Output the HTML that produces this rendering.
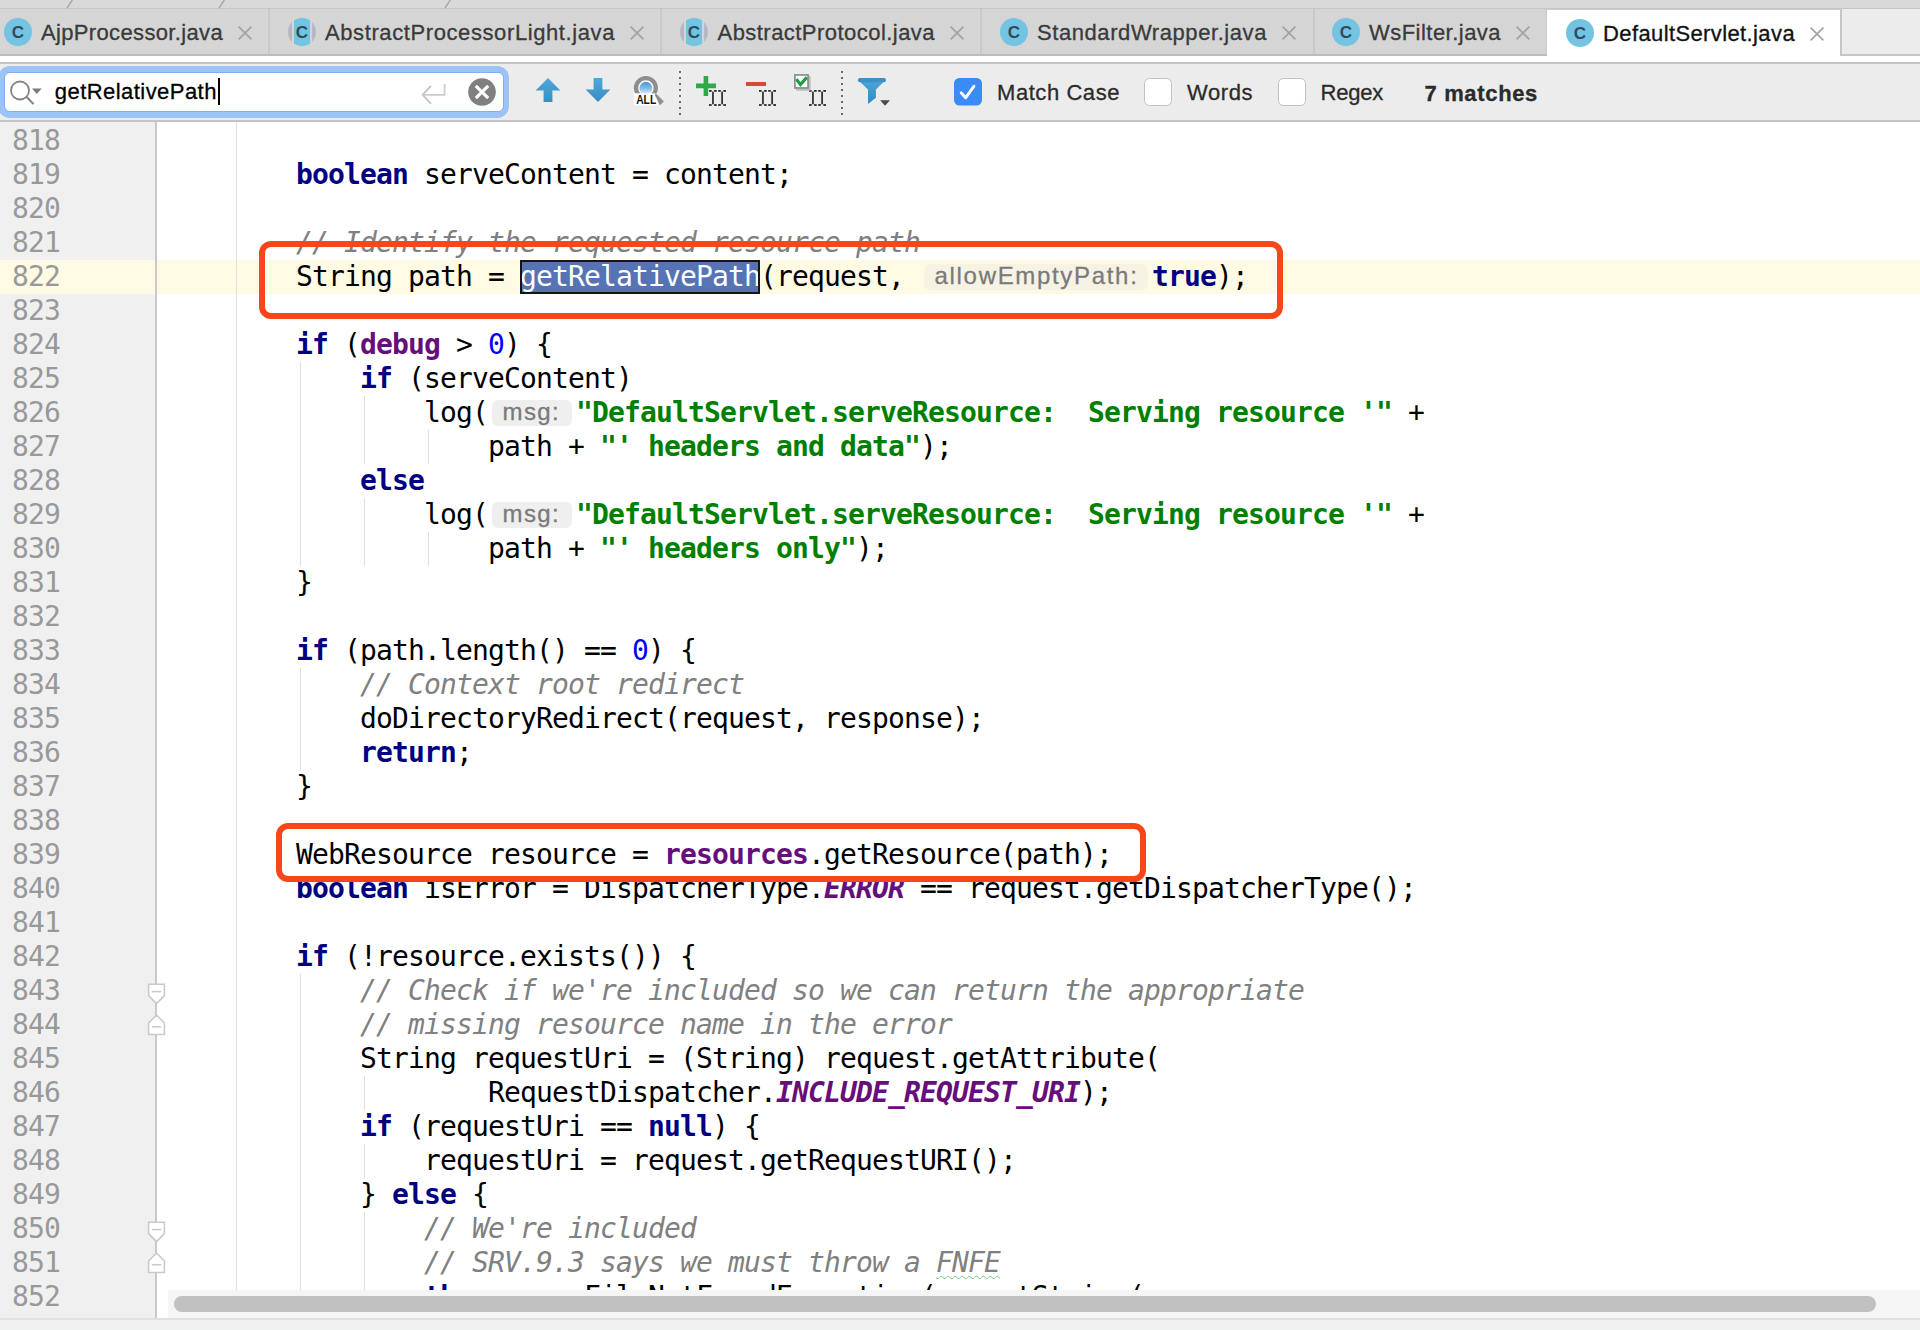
<!DOCTYPE html>
<html lang="en"><head><meta charset="utf-8"><title>DefaultServlet.java</title>
<style>
html,body{margin:0;padding:0}
body{width:1920px;height:1330px;position:relative;overflow:hidden;background:#fff;font-family:"Liberation Sans",sans-serif}
.abs,.abs *{box-sizing:border-box}
div,span,svg,i,b{position:absolute}
/* top */
#strip{left:0;top:0;width:1920px;height:9px;background:#d9d9d9;border-bottom:1px solid #c6c6c6;box-sizing:border-box}
#tabs{left:0;top:9px;width:1920px;height:47px;background:#d5d5d5;border-bottom:2px solid #bebebe;box-sizing:border-box}
.tab{top:0;height:45px}
.tab .sep{right:-1px;top:0;width:2px;height:45px;background:#c9c9c9}
.tab .lbl{top:1px;height:45px;line-height:45px;font-size:22px;color:#3a3a3a;white-space:nowrap;-webkit-text-stroke:0.3px #3a3a3a}
.tab.act{background:#fff;height:47px;border-top:1px solid #cfcfcf;box-sizing:border-box}
.tab.act .lbl{color:#111;-webkit-text-stroke:0.3px #111}
#rest{left:1840px;top:0;width:80px;height:47px;background:#ececec;border-left:2px solid #c6c6c6;border-bottom:2px solid #c6c6c6;box-sizing:border-box}
#wgap{left:0;top:56px;width:1920px;height:6px;background:#fff}
#search{left:0;top:62px;width:1920px;height:60px;background:#ececec;border-top:2px solid #c4c4c4;border-bottom:2px solid #c4c4c4;box-sizing:border-box}
.stext{font-size:22px;color:#2b2b2b;-webkit-text-stroke:0.3px;white-space:nowrap;line-height:28px;height:28px}
/* editor */
#gutter{left:0;top:122px;width:155px;height:1196px;background:#f0f0f0}
#gline{left:155px;top:122px;width:2px;height:1196px;background:#c9c9c9}
.ln,.cl{font-family:"DejaVu Sans Mono","Liberation Mono",monospace;font-size:28px;letter-spacing:-0.857px;line-height:34px;height:34px;white-space:pre}
.ln{left:12px;color:#999}
.cl{color:#000}
.cl b,.cl i,.cl span{position:static}
.k{color:#000080}.s{color:#008000}.n{color:#0000ff}.f{color:#660e7a}.sf{color:#660e7a;font-style:italic}
.c{color:#808080;font-weight:normal}
.typo{text-decoration:underline wavy #7fbf7f 1px;text-underline-offset:3px}
.cl .h{display:inline-block;position:relative;height:34px;vertical-align:top;margin:0 4px;letter-spacing:0}
.cl .h:before{content:"";position:absolute;left:0;right:0;top:4px;height:25.5px;border-radius:6px;background:#efefef}
.cl .h.hy:before{background:#f6f3e4}
.cl .h.hy span{letter-spacing:1.68px}
.cl .h span{position:absolute;left:10.5px;top:0;font-family:"Liberation Sans",sans-serif;font-size:24px;letter-spacing:1.4px;color:#7a7a7a;line-height:32px;-webkit-text-stroke:0.3px #7a7a7a}
.cl .sel{background:#5673b3;color:#fff;outline:2px solid #151515;outline-offset:-2px;display:inline-block;height:34px}
.g{width:1.4px;background:#e0e0e0}
.rbox{border:6px solid #f8461b;border-radius:12px;box-sizing:border-box}
</style></head><body>

<div id="strip"></div>
<svg style="left:0;top:0" width="960" height="9" viewBox="0 0 960 9">
<line x1="73" y1="-1" x2="67" y2="8" stroke="#a8a8a8" stroke-width="1.4"/>
<line x1="225" y1="-1" x2="219" y2="8" stroke="#a8a8a8" stroke-width="1.4"/>
<line x1="451" y1="-1" x2="445" y2="8" stroke="#a8a8a8" stroke-width="1.4"/>
</svg>
<div id="tabs">
<div class="tab" style="left:-15px;width:284px">
<svg style="left:19px;top:8.8px" width="28" height="28" viewBox="0 0 28 28"><circle cx="14" cy="14" r="14" fill="#73c3e3"/><text x="14" y="20.3" text-anchor="middle" font-family="Liberation Sans, sans-serif" font-weight="bold" font-size="17" fill="#2f4b5c">C</text></svg>
<span class="lbl" style="left:56px;letter-spacing:0.348px">AjpProcessor.java</span>
<svg style="left:253px;top:17px" width="14" height="14" viewBox="0 0 14 14"><path d="M0.6 0.6L13.4 13.4M13.4 0.6L0.6 13.4" stroke="#a3a3a3" stroke-width="1.7" fill="none"/></svg>
<div class="sep"></div>
</div>
<div class="tab" style="left:269px;width:392px">
<svg style="left:19px;top:8.8px" width="28" height="28" viewBox="0 0 28 28"><defs><clipPath id="cp33"><circle cx="14" cy="14" r="14"/></clipPath></defs><g clip-path="url(#cp33)"><rect x="0" y="0" width="4" height="28" fill="#b3bac6"/><rect x="24" y="0" width="4" height="28" fill="#b3bac6"/><rect x="6" y="0" width="16" height="28" fill="#73c3e3"/></g><text x="14" y="20.3" text-anchor="middle" font-family="Liberation Sans, sans-serif" font-weight="bold" font-size="17" fill="#2f4b5c">C</text></svg>
<span class="lbl" style="left:56px;letter-spacing:0.597px">AbstractProcessorLight.java</span>
<svg style="left:361px;top:17px" width="14" height="14" viewBox="0 0 14 14"><path d="M0.6 0.6L13.4 13.4M13.4 0.6L0.6 13.4" stroke="#a3a3a3" stroke-width="1.7" fill="none"/></svg>
<div class="sep"></div>
</div>
<div class="tab" style="left:661px;width:320px">
<svg style="left:19px;top:8.8px" width="28" height="28" viewBox="0 0 28 28"><defs><clipPath id="cp33"><circle cx="14" cy="14" r="14"/></clipPath></defs><g clip-path="url(#cp33)"><rect x="0" y="0" width="4" height="28" fill="#b3bac6"/><rect x="24" y="0" width="4" height="28" fill="#b3bac6"/><rect x="6" y="0" width="16" height="28" fill="#73c3e3"/></g><text x="14" y="20.3" text-anchor="middle" font-family="Liberation Sans, sans-serif" font-weight="bold" font-size="17" fill="#2f4b5c">C</text></svg>
<span class="lbl" style="left:56.5px;letter-spacing:0.459px">AbstractProtocol.java</span>
<svg style="left:289px;top:17px" width="14" height="14" viewBox="0 0 14 14"><path d="M0.6 0.6L13.4 13.4M13.4 0.6L0.6 13.4" stroke="#a3a3a3" stroke-width="1.7" fill="none"/></svg>
<div class="sep"></div>
</div>
<div class="tab" style="left:981px;width:332.5px">
<svg style="left:19px;top:8.8px" width="28" height="28" viewBox="0 0 28 28"><circle cx="14" cy="14" r="14" fill="#73c3e3"/><text x="14" y="20.3" text-anchor="middle" font-family="Liberation Sans, sans-serif" font-weight="bold" font-size="17" fill="#2f4b5c">C</text></svg>
<span class="lbl" style="left:56px;letter-spacing:0.575px">StandardWrapper.java</span>
<svg style="left:301px;top:17px" width="14" height="14" viewBox="0 0 14 14"><path d="M0.6 0.6L13.4 13.4M13.4 0.6L0.6 13.4" stroke="#a3a3a3" stroke-width="1.7" fill="none"/></svg>
<div class="sep"></div>
</div>
<div class="tab" style="left:1313.5px;width:233.5px">
<svg style="left:18px;top:8.8px" width="28" height="28" viewBox="0 0 28 28"><circle cx="14" cy="14" r="14" fill="#73c3e3"/><text x="14" y="20.3" text-anchor="middle" font-family="Liberation Sans, sans-serif" font-weight="bold" font-size="17" fill="#2f4b5c">C</text></svg>
<span class="lbl" style="left:55.5px;letter-spacing:0.469px">WsFilter.java</span>
<svg style="left:202px;top:17px" width="14" height="14" viewBox="0 0 14 14"><path d="M0.6 0.6L13.4 13.4M13.4 0.6L0.6 13.4" stroke="#a3a3a3" stroke-width="1.7" fill="none"/></svg>
<div class="sep"></div>
</div>
<div class="tab act" style="left:1547px;width:293px">
<svg style="left:19px;top:8.8px" width="28" height="28" viewBox="0 0 28 28"><circle cx="14" cy="14" r="14" fill="#73c3e3"/><text x="14" y="20.3" text-anchor="middle" font-family="Liberation Sans, sans-serif" font-weight="bold" font-size="17" fill="#2f4b5c">C</text></svg>
<span class="lbl" style="left:56px;letter-spacing:0.387px">DefaultServlet.java</span>
<svg style="left:263px;top:17px" width="14" height="14" viewBox="0 0 14 14"><path d="M0.6 0.6L13.4 13.4M13.4 0.6L0.6 13.4" stroke="#a3a3a3" stroke-width="1.7" fill="none"/></svg>
</div>
<div id="rest"></div>
</div>
<div id="wgap"></div>
<div id="search">
<div style="left:-2px;top:2.3px;width:511px;height:51.5px;border-radius:12px;background:#9bc3f5"></div>
<div style="left:4px;top:8.3px;width:499.5px;height:39.8px;border-radius:6px;background:#fff;border:1px solid #80afe9;box-sizing:border-box"></div>
<svg style="left:6px;top:14.5px" width="40" height="30" viewBox="0 0 40 30"><circle cx="14" cy="11.5" r="9" fill="none" stroke="#858585" stroke-width="1.8"/><path d="M20.6 18.1L27 24.5" stroke="#858585" stroke-width="2.1" stroke-linecap="round"/><path d="M26 9.5h9.7l-4.85 5.6z" fill="#7d7d7d"/></svg>
<span class="stext" style="left:54.8px;top:14px;color:#000;letter-spacing:0.446px">getRelativePath</span>
<div style="left:218px;top:14.3px;width:2px;height:27px;background:#000"></div>
<svg style="left:420px;top:18px" width="28" height="24" viewBox="0 0 28 24"><path d="M24.6 2v10.8H4" fill="none" stroke="#cdcdcd" stroke-width="1.8"/><path d="M11 3.8L2.6 12.8L11 21.8" fill="none" stroke="#c4c4c4" stroke-width="1.8"/></svg>
<svg style="left:468px;top:14px" width="28" height="28" viewBox="0 0 28 28"><circle cx="14" cy="14" r="13.8" fill="#808080"/><path d="M7.8 7.8L20.2 20.2M20.2 7.8L7.8 20.2" stroke="#fff" stroke-width="3.1"/></svg>
<svg style="left:534px;top:13px" width="80" height="28" viewBox="0 0 80 28"><defs><linearGradient id="ga" x1="0" y1="0" x2="0" y2="1"><stop offset="0" stop-color="#4ea8dc"/><stop offset="1" stop-color="#3a8cc2"/></linearGradient></defs><path d="M14 1L26.4 13.4H18.4V25H9.6V13.4H1.6z" fill="url(#ga)"/><path d="M64 25L76.4 12.6H68.4V1H59.6V12.6H51.6z" fill="url(#ga)"/></svg>
<svg style="left:630px;top:8px" width="40" height="36" viewBox="0 0 40 36"><defs><linearGradient id="gb" x1="0" y1="0" x2="0" y2="1"><stop offset="0" stop-color="#3f96d6"/><stop offset="0.55" stop-color="#8dbfe3"/><stop offset="1" stop-color="#e9f1f8"/></linearGradient></defs><circle cx="15.9" cy="16" r="9.9" fill="#fff" stroke="#8e8e8e" stroke-width="4.3"/><circle cx="15.9" cy="16.2" r="6.4" fill="url(#gb)"/><rect x="3.8" y="21.3" width="23.9" height="12.1" fill="#fff"/><path d="M25.4 20.8L33.9 29.6L29.8 33.3L26.6 26.6L25 23.4z" fill="#8e8e8e"/><text x="6.2" y="31.7" font-family="Liberation Sans, sans-serif" font-weight="bold" font-size="12" fill="#151515" textLength="20" lengthAdjust="spacingAndGlyphs">ALL</text></svg>
<div style="left:679px;top:7px;width:2px;height:44px;background:repeating-linear-gradient(to bottom,#6a6a6a 0,#6a6a6a 2px,transparent 2px,transparent 6px)"></div>
<div style="left:841px;top:7px;width:2px;height:44px;background:repeating-linear-gradient(to bottom,#6a6a6a 0,#6a6a6a 2px,transparent 2px,transparent 6px)"></div>
<svg style="left:709px;top:26px" width="18" height="17" viewBox="0 0 18 17"><g fill="#2b2b2b"><rect x="0" y="0" width="2.7" height="1.8"/><rect x="0" y="14.1" width="2.7" height="1.8"/><rect x="5.1" y="0" width="2.6" height="1.8"/><rect x="5.1" y="14.1" width="2.6" height="1.8"/><rect x="9.2" y="0" width="2.6" height="1.8"/><rect x="9.2" y="14.1" width="2.6" height="1.8"/><rect x="14.3" y="0" width="2.7" height="1.8"/><rect x="14.3" y="14.1" width="2.7" height="1.8"/><rect x="3.1" y="1.6" width="1.7" height="12.7"/><rect x="12.25" y="1.6" width="1.7" height="12.7"/></g></svg>
<svg style="left:759px;top:26px" width="18" height="17" viewBox="0 0 18 17"><g fill="#2b2b2b"><rect x="0" y="0" width="2.7" height="1.8"/><rect x="0" y="14.1" width="2.7" height="1.8"/><rect x="5.1" y="0" width="2.6" height="1.8"/><rect x="5.1" y="14.1" width="2.6" height="1.8"/><rect x="9.2" y="0" width="2.6" height="1.8"/><rect x="9.2" y="14.1" width="2.6" height="1.8"/><rect x="14.3" y="0" width="2.7" height="1.8"/><rect x="14.3" y="14.1" width="2.7" height="1.8"/><rect x="3.1" y="1.6" width="1.7" height="12.7"/><rect x="12.25" y="1.6" width="1.7" height="12.7"/></g></svg>
<svg style="left:809px;top:26px" width="18" height="17" viewBox="0 0 18 17"><g fill="#2b2b2b"><rect x="0" y="0" width="2.7" height="1.8"/><rect x="0" y="14.1" width="2.7" height="1.8"/><rect x="5.1" y="0" width="2.6" height="1.8"/><rect x="5.1" y="14.1" width="2.6" height="1.8"/><rect x="9.2" y="0" width="2.6" height="1.8"/><rect x="9.2" y="14.1" width="2.6" height="1.8"/><rect x="14.3" y="0" width="2.7" height="1.8"/><rect x="14.3" y="14.1" width="2.7" height="1.8"/><rect x="3.1" y="1.6" width="1.7" height="12.7"/><rect x="12.25" y="1.6" width="1.7" height="12.7"/></g></svg>
<svg style="left:696px;top:12px" width="20" height="20" viewBox="0 0 20 20"><path d="M7.6 0h4.6v7.6H20v4.6h-7.8V20H7.6v-7.8H0V7.6h7.6z" fill="#2fa84a"/></svg>
<div style="left:746px;top:18px;width:20px;height:4.2px;background:#d8483a"></div>
<svg style="left:793px;top:9px" width="19" height="19" viewBox="0 0 19 19"><rect x="3" y="3" width="14.6" height="14.7" fill="#bcbcbc"/><rect x="1.85" y="1.95" width="13.2" height="13" fill="#fff" stroke="#8c8c8c" stroke-width="1.7"/><path d="M3.4 6.2L7.4 11.6L13.8 4.4" fill="none" stroke="#1f9b42" stroke-width="3.1"/></svg>
<svg style="left:856px;top:12px" width="38" height="32" viewBox="0 0 38 32"><defs><linearGradient id="gf" x1="0" y1="0" x2="0" y2="1"><stop offset="0" stop-color="#4aa3d8"/><stop offset="1" stop-color="#3889c2"/></linearGradient></defs><path d="M4.2 6.1H27.5L19.9 13.5V21.7L12 27.9V13.5z" fill="url(#gf)"/><rect x="1.9" y="1.9" width="28.1" height="4.4" rx="2.1" fill="#3c90c8"/><path d="M24.1 24.3h9.9l-4.95 5.5z" fill="#4a4a4a"/></svg>
<svg style="left:954px;top:14px" width="28" height="28" viewBox="0 0 28 28"><rect x="0" y="0" width="28" height="27.6" rx="5.5" fill="#3a8bf6"/><path d="M7.2 14.8L11.6 19.8L20 8.2" fill="none" stroke="#fff" stroke-width="2.9" stroke-linecap="round" stroke-linejoin="round"/></svg>
<div style="left:1144px;top:14px;width:28px;height:27.6px;border-radius:5.5px;background:#fff;border:1px solid #c2c2c2;box-sizing:border-box"></div>
<div style="left:1278px;top:14px;width:28px;height:27.6px;border-radius:5.5px;background:#fff;border:1px solid #c2c2c2;box-sizing:border-box"></div>
<span class="stext" style="left:997px;top:14.5px;letter-spacing:0.563px">Match Case</span>
<span class="stext" style="left:1187px;top:14.5px;letter-spacing:0.568px">Words</span>
<span class="stext" style="left:1320.5px;top:14.5px;letter-spacing:-0.218px">Regex</span>
<span class="stext" style="left:1424.5px;top:15.5px;letter-spacing:0.655px;font-weight:bold">7 matches</span>
</div>
<div id="gutter"></div>
<div style="left:0;top:260px;width:1920px;height:34px;background:#fffae3"></div>
<div id="gline"></div>
<div class="g" style="left:235.6px;top:122px;height:1168px"></div>
<div class="g" style="left:299.6px;top:362px;height:204px"></div>
<div class="g" style="left:299.6px;top:668px;height:102px"></div>
<div class="g" style="left:299.6px;top:974px;height:316px"></div>
<div class="g" style="left:363.6px;top:396px;height:68px"></div>
<div class="g" style="left:363.6px;top:498px;height:68px"></div>
<div class="g" style="left:363.6px;top:1076px;height:34px"></div>
<div class="g" style="left:363.6px;top:1144px;height:34px"></div>
<div class="g" style="left:363.6px;top:1212px;height:78px"></div>
<div class="g" style="left:427.6px;top:430px;height:34px"></div>
<div class="g" style="left:427.6px;top:532px;height:34px"></div>
<div class="ln" style="top:124px">818</div>
<div class="ln" style="top:158px">819</div>
<div class="ln" style="top:192px">820</div>
<div class="ln" style="top:226px">821</div>
<div class="ln" style="top:260px">822</div>
<div class="ln" style="top:294px">823</div>
<div class="ln" style="top:328px">824</div>
<div class="ln" style="top:362px">825</div>
<div class="ln" style="top:396px">826</div>
<div class="ln" style="top:430px">827</div>
<div class="ln" style="top:464px">828</div>
<div class="ln" style="top:498px">829</div>
<div class="ln" style="top:532px">830</div>
<div class="ln" style="top:566px">831</div>
<div class="ln" style="top:600px">832</div>
<div class="ln" style="top:634px">833</div>
<div class="ln" style="top:668px">834</div>
<div class="ln" style="top:702px">835</div>
<div class="ln" style="top:736px">836</div>
<div class="ln" style="top:770px">837</div>
<div class="ln" style="top:804px">838</div>
<div class="ln" style="top:838px">839</div>
<div class="ln" style="top:872px">840</div>
<div class="ln" style="top:906px">841</div>
<div class="ln" style="top:940px">842</div>
<div class="ln" style="top:974px">843</div>
<div class="ln" style="top:1008px">844</div>
<div class="ln" style="top:1042px">845</div>
<div class="ln" style="top:1076px">846</div>
<div class="ln" style="top:1110px">847</div>
<div class="ln" style="top:1144px">848</div>
<div class="ln" style="top:1178px">849</div>
<div class="ln" style="top:1212px">850</div>
<div class="ln" style="top:1246px">851</div>
<div class="ln" style="top:1280px">852</div>
<div style="left:0;top:122px;width:1920px;height:1168px;overflow:hidden">
<div class="cl" style="left:296px;top:36px"><b class="k">boolean</b> serveContent = content;</div>
<div class="cl" style="left:296px;top:104px"><i class="c">// Identify the requested resource path</i></div>
<div class="cl" style="left:296px;top:138px">String path = <span class="sel">getRelativePath</span>(request, <span class="h hy" style="width:224px"><span>allowEmptyPath:</span></span><b class="k">true</b>);</div>
<div class="cl" style="left:296px;top:206px"><b class="k">if</b> (<b class="f">debug</b> &gt; <span class="n">0</span>) {</div>
<div class="cl" style="left:360px;top:240px"><b class="k">if</b> (serveContent)</div>
<div class="cl" style="left:424px;top:274px">log(<span class="h " style="width:80px"><span>msg:</span></span><b class="s">"DefaultServlet.serveResource:  Serving resource '"</b> +</div>
<div class="cl" style="left:488px;top:308px">path + <b class="s">"' headers and data"</b>);</div>
<div class="cl" style="left:360px;top:342px"><b class="k">else</b></div>
<div class="cl" style="left:424px;top:376px">log(<span class="h " style="width:80px"><span>msg:</span></span><b class="s">"DefaultServlet.serveResource:  Serving resource '"</b> +</div>
<div class="cl" style="left:488px;top:410px">path + <b class="s">"' headers only"</b>);</div>
<div class="cl" style="left:296px;top:444px">}</div>
<div class="cl" style="left:296px;top:512px"><b class="k">if</b> (path.length() == <span class="n">0</span>) {</div>
<div class="cl" style="left:360px;top:546px"><i class="c">// Context root redirect</i></div>
<div class="cl" style="left:360px;top:580px">doDirectoryRedirect(request, response);</div>
<div class="cl" style="left:360px;top:614px"><b class="k">return</b>;</div>
<div class="cl" style="left:296px;top:648px">}</div>
<div class="cl" style="left:296px;top:716px">WebResource resource = <b class="f">resources</b>.getResource(path);</div>
<div class="cl" style="left:296px;top:750px"><b class="k">boolean</b> isError = DispatcherType.<b class="sf">ERROR</b> == request.getDispatcherType();</div>
<div class="cl" style="left:296px;top:818px"><b class="k">if</b> (!resource.exists()) {</div>
<div class="cl" style="left:360px;top:852px"><i class="c">// Check if we're included so we can return the appropriate</i></div>
<div class="cl" style="left:360px;top:886px"><i class="c">// missing resource name in the error</i></div>
<div class="cl" style="left:360px;top:920px">String requestUri = (String) request.getAttribute(</div>
<div class="cl" style="left:488px;top:954px">RequestDispatcher.<b class="sf">INCLUDE_REQUEST_URI</b>);</div>
<div class="cl" style="left:360px;top:988px"><b class="k">if</b> (requestUri == <b class="k">null</b>) {</div>
<div class="cl" style="left:424px;top:1022px">requestUri = request.getRequestURI();</div>
<div class="cl" style="left:360px;top:1056px">} <b class="k">else</b> {</div>
<div class="cl" style="left:424px;top:1090px"><i class="c">// We're included</i></div>
<div class="cl" style="left:424px;top:1124px"><i class="c">// SRV.9.3 says we must throw a </i><i class="c typo">FNFE</i></div>
<div class="cl" style="left:424px;top:1158px"><b class="k">throw</b> <b class="k">new</b> FileNotFoundException(sm.getString(</div>
</div>
<svg style="left:147px;top:983.2px" width="19" height="22" viewBox="0 0 19 22"><path d="M1.6 1.2H17.4V12.6L9.5 20.6L1.6 12.6z" fill="#fff" stroke="#c9c9c9" stroke-width="1.5"/><path d="M4.8 8.6H14.2" stroke="#c9c9c9" stroke-width="1.5"/></svg>
<svg style="left:147px;top:1013.8px" width="19" height="22" viewBox="0 0 19 22"><path d="M1.6 20.4H17.4V9L9.5 1L1.6 9z" fill="#fff" stroke="#c9c9c9" stroke-width="1.5"/><path d="M4.8 12.8H14.2" stroke="#c9c9c9" stroke-width="1.5"/></svg>
<svg style="left:147px;top:1221.2px" width="19" height="22" viewBox="0 0 19 22"><path d="M1.6 1.2H17.4V12.6L9.5 20.6L1.6 12.6z" fill="#fff" stroke="#c9c9c9" stroke-width="1.5"/><path d="M4.8 8.6H14.2" stroke="#c9c9c9" stroke-width="1.5"/></svg>
<svg style="left:147px;top:1251.8px" width="19" height="22" viewBox="0 0 19 22"><path d="M1.6 20.4H17.4V9L9.5 1L1.6 9z" fill="#fff" stroke="#c9c9c9" stroke-width="1.5"/><path d="M4.8 12.8H14.2" stroke="#c9c9c9" stroke-width="1.5"/></svg>
<div class="rbox" style="left:259px;top:240.5px;width:1024px;height:78px"></div>
<div class="rbox" style="left:276px;top:823px;width:869.5px;height:58.5px"></div>
<div style="left:168px;top:1290px;width:1752px;height:28px;background:#f5f5f5"></div>
<div style="left:174px;top:1296px;width:1702px;height:16px;border-radius:8px;background:#c1c1c1"></div>
<div style="left:0;top:1318px;width:1920px;height:12px;background:#f0f1f1;border-top:2px solid #e1e1e1;box-sizing:border-box"></div>
</body></html>
